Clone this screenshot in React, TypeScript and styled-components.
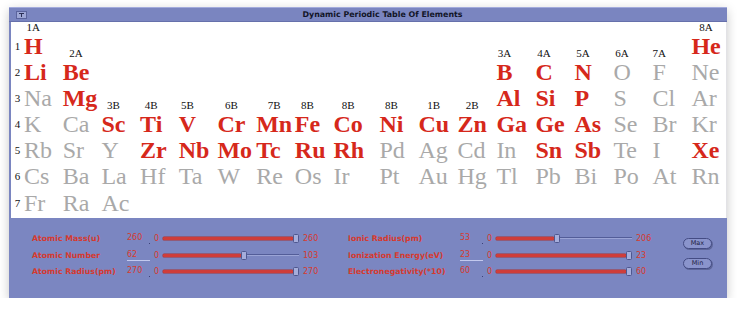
import React from 'react';
import styled, { createGlobalStyle } from 'styled-components';

const PageBody = createGlobalStyle`
  body {
    margin: 0;
    background: #ffffff;
  }
`;

const Window = styled.div`
    margin: 7px 0 0 9px;
    width: 718px;
    display: flex;
    flex-direction: column;
    box-shadow: 0 3px 10px rgba(0, 0, 0, 0.22);
`;

const TitleBar = styled.div`
    height: 15px;
    box-sizing: border-box;
    display: flex;
    align-items: center;
    padding-left: 7px;
    background: #7a85c0;
    border-top: 1px solid #a3abdc;
    border-bottom: 1px solid #6670ab;
`;

const CloseBox = styled.svg`
    flex: none;
    display: block;
`;

const Title = styled.div`
    flex: 1;
    padding-left: 11px;
    text-align: center;
    font: bold 7.9px 'DejaVu Sans', sans-serif;
    color: #121528;
    white-space: nowrap;
`;

const TableArea = styled.div`
    height: 196px;
    box-sizing: border-box;
    background: #ffffff;
    border-left: 2px solid #7a85c0;
    border-right: 1px solid #e2e2e6;
`;

const Grid = styled.div`
    display: grid;
    grid-template-columns: 13px repeat(9, 38.7px) 7.2px repeat(9, 39px);
    grid-template-rows: 11px repeat(7, 26.1px);
`;

const RowNum = styled.div<{ $row: number }>`
    grid-column: 1;
    grid-row: ${(p) => p.$row + 1};
    font: 11px 'Liberation Serif', serif;
    line-height: 26.1px;
    text-align: center;
    color: #111;
`;

const Cell = styled.div<{ $col: number; $row: number; $labeled: boolean }>`
    grid-column: ${(p) => (p.$col <= 9 ? p.$col + 1 : p.$col + 2)};
    grid-row: ${(p) => (p.$labeled ? `${p.$row} / span 2` : `${p.$row + 1}`)};
    justify-self: start;
    display: flex;
    flex-direction: column;
    align-items: center;
    justify-content: flex-end;
`;

const Group = styled.span`
    font: 11px 'Liberation Serif', serif;
    line-height: 11px;
    color: #111;
    white-space: nowrap;
`;

const Symbol = styled.span<{ $active: boolean }>`
    font-family: 'Liberation Serif', serif;
    font-size: 24px;
    line-height: 26.1px;
    font-weight: ${(p) => (p.$active ? 'bold' : 'normal')};
    color: ${(p) => (p.$active ? '#d6281b' : '#a9a9a9')};
    white-space: nowrap;
`;

const Panel = styled.div`
    height: 80px;
    box-sizing: border-box;
    background: #7b86c1;
    display: flex;
    align-items: flex-start;
    padding: 12px 0 0 23px;
`;

const Controls = styled.div<{ $labelWidth: number; $maxWidth: number }>`
    display: grid;
    grid-template-columns: ${(p) => p.$labelWidth}px 26px 10px 136px ${(p) => p.$maxWidth}px;
    grid-template-rows: 16px 18px 14px;
    align-items: center;
    font-family: 'DejaVu Sans', sans-serif;
    color: #d63a2f;
`;

const Label = styled.span`
    font-size: 7.8px;
    font-weight: bold;
    white-space: nowrap;
`;

const Field = styled.span<{ $focused?: boolean }>`
    position: relative;
    width: 23px;
    height: 11px;
    font-size: 8px;
    line-height: 11px;
    border-bottom: 1px solid ${(p) => (p.$focused ? '#c3c9ee' : 'transparent')};
    &::after {
        content: '';
        display: ${(p) => (p.$focused ? 'none' : 'block')};
        position: absolute;
        right: 0;
        bottom: -1px;
        width: 1px;
        height: 1px;
        background: #3b4277;
    }
`;

const Limit = styled.span`
    font-size: 8px;
    padding-left: 4px;
    white-space: nowrap;
`;

const MinLimit = styled(Limit)`
    padding-left: 1px;
`;

const Track = styled.div`
    display: flex;
    align-items: center;
    height: 10px;
`;

const Fill = styled.div`
    height: 3px;
    background: #cf3d3a;
    box-shadow: 0 0 0 0.5px #a93030;
    border-radius: 1px;
`;

const Thumb = styled.div`
    flex: none;
    width: 6px;
    height: 9px;
    box-sizing: border-box;
    background: #a5addb;
    border: 1px solid #4e578f;
    border-radius: 1.5px;
`;

const Rest = styled.div`
    flex: 1;
    height: 1px;
    background: #535d98;
    border-bottom: 1px solid #9ba4d6;
`;

const Buttons = styled.div`
    display: flex;
    flex-direction: column;
    gap: 9px;
    padding-top: 8px;
`;

const Button = styled.button`
    width: 29px;
    height: 11px;
    padding: 0;
    box-sizing: border-box;
    border: 1px solid #444c84;
    border-radius: 6px;
    background: #8a94cc;
    box-shadow: 1px 1px 0 #5d6699;
    font: 6.5px 'DejaVu Sans', sans-serif;
    line-height: 9px;
    color: #1d2140;
`;

type El = [string, number, boolean, string?];

// [symbol, column, active, group label above]
const periods: El[][] = [
    [['H', 1, true, '1A'], ['He', 18, true, '8A']],
    [
        ['Li', 1, true], ['Be', 2, true, '2A'], ['B', 13, true, '3A'], ['C', 14, true, '4A'],
        ['N', 15, true, '5A'], ['O', 16, false, '6A'], ['F', 17, false, '7A'], ['Ne', 18, false],
    ],
    [
        ['Na', 1, false], ['Mg', 2, true], ['Al', 13, true], ['Si', 14, true],
        ['P', 15, true], ['S', 16, false], ['Cl', 17, false], ['Ar', 18, false],
    ],
    [
        ['K', 1, false], ['Ca', 2, false], ['Sc', 3, true, '3B'], ['Ti', 4, true, '4B'],
        ['V', 5, true, '5B'], ['Cr', 6, true, '6B'], ['Mn', 7, true, '7B'], ['Fe', 8, true, '8B'],
        ['Co', 9, true, '8B'], ['Ni', 10, true, '8B'], ['Cu', 11, true, '1B'], ['Zn', 12, true, '2B'],
        ['Ga', 13, true], ['Ge', 14, true], ['As', 15, true], ['Se', 16, false],
        ['Br', 17, false], ['Kr', 18, false],
    ],
    [
        ['Rb', 1, false], ['Sr', 2, false], ['Y', 3, false], ['Zr', 4, true], ['Nb', 5, true],
        ['Mo', 6, true], ['Tc', 7, true], ['Ru', 8, true], ['Rh', 9, true], ['Pd', 10, false],
        ['Ag', 11, false], ['Cd', 12, false], ['In', 13, false], ['Sn', 14, true],
        ['Sb', 15, true], ['Te', 16, false], ['I', 17, false], ['Xe', 18, true],
    ],
    [
        ['Cs', 1, false], ['Ba', 2, false], ['La', 3, false], ['Hf', 4, false], ['Ta', 5, false],
        ['W', 6, false], ['Re', 7, false], ['Os', 8, false], ['Ir', 9, false], ['Pt', 10, false],
        ['Au', 11, false], ['Hg', 12, false], ['Tl', 13, false], ['Pb', 14, false],
        ['Bi', 15, false], ['Po', 16, false], ['At', 17, false], ['Rn', 18, false],
    ],
    [['Fr', 1, false], ['Ra', 2, false], ['Ac', 3, false]],
];

interface Prop {
    label: string;
    value: string;
    max: string;
    pos: number;
    focused?: boolean;
}

const leftProps: Prop[] = [
    { label: 'Atomic Mass(u)', value: '260', max: '260', pos: 1 },
    { label: 'Atomic Number', value: '62', max: '103', pos: 0.6, focused: true },
    { label: 'Atomic Radius(pm)', value: '270', max: '270', pos: 1 },
];

const rightProps: Prop[] = [
    { label: 'Ionic Radius(pm)', value: '53', max: '206', pos: 0.445 },
    { label: 'Ionization Energy(eV)', value: '23', max: '23', pos: 1, focused: true },
    { label: 'Electronegativity(*10)', value: '60', max: '60', pos: 1 },
];

const Slider = ({ pos }: { pos: number }) => (
    <Track>
        <Fill style={{ width: `calc((100% - 6px) * ${pos})` }} />
        <Thumb />
        <Rest />
    </Track>
);

const ControlGroup = ({ rows, labelWidth, maxWidth }: { rows: Prop[]; labelWidth: number; maxWidth: number }) => (
    <Controls $labelWidth={labelWidth} $maxWidth={maxWidth}>
        {rows.map((r) => (
            <React.Fragment key={r.label}>
                <Label>{r.label}</Label>
                <Field $focused={r.focused}>{r.value}</Field>
                <MinLimit>0</MinLimit>
                <Slider pos={r.pos} />
                <Limit>{r.max}</Limit>
            </React.Fragment>
        ))}
    </Controls>
);

const App = () => {
    return (
        <>
            <PageBody />
            <Window>
                <TitleBar>
                    <CloseBox width="11" height="8" viewBox="0 0 11 8">
                        <rect x="0.5" y="0.5" width="10" height="7" fill="#9ea7d6" stroke="#5b649d" />
                        <path d="M3 2.5 H8 M5.5 2.5 V6" stroke="#2a2f55" strokeWidth="1" fill="none" />
                    </CloseBox>
                    <Title>Dynamic Periodic Table Of Elements</Title>
                </TitleBar>
                <TableArea>
                    <Grid>
                        {periods.map((row, i) => (
                            <React.Fragment key={i}>
                                <RowNum $row={i + 1}>{i + 1}</RowNum>
                                {row.map(([sym, col, active, group]) => (
                                    <Cell key={sym} $col={col} $row={i + 1} $labeled={!!group}>
                                        {group && <Group>{group}</Group>}
                                        <Symbol $active={active}>{sym}</Symbol>
                                    </Cell>
                                ))}
                            </React.Fragment>
                        ))}
                    </Grid>
                </TableArea>
                <Panel>
                    <ControlGroup rows={leftProps} labelWidth={95} maxWidth={49} />
                    <ControlGroup rows={rightProps} labelWidth={112} maxWidth={51} />
                    <Buttons>
                        <Button>Max</Button>
                        <Button>Min</Button>
                    </Buttons>
                </Panel>
            </Window>
        </>
    );
};

export default App;
